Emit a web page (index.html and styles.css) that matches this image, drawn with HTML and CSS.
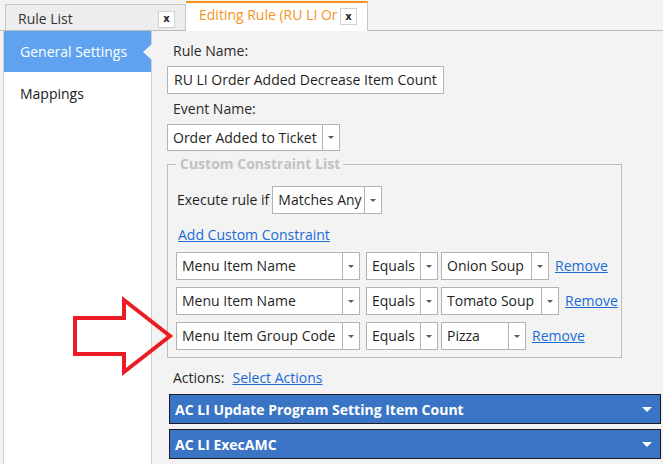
FILE: index.html
```html
<!DOCTYPE html>
<html lang="en">
<head>
<meta charset="utf-8">
<title>Editing Rule</title>
<link rel="stylesheet" href="styles.css">
</head>
<body>
<div class="app">
  <div class="tabs">
    <div class="tab">
      <span class="tab-title">Rule List</span>
      <span class="tab-close">x</span>
    </div>
    <div class="tab active">
      <span class="tab-title">Editing Rule (RU LI Or</span>
      <span class="tab-close">x</span>
    </div>
  </div>
  <div class="body">
    <nav class="sidebar">
      <div class="nav-item selected">General Settings</div>
      <div class="nav-item">Mappings</div>
    </nav>
    <main class="content">
      <div class="label">Rule Name:</div>
      <div class="textbox">RU LI Order Added Decrease Item Count</div>
      <div class="label">Event Name:</div>
      <div class="combo w-event"><span class="combo-text">Order Added to Ticket</span><span class="combo-btn"></span></div>

      <fieldset class="group">
        <legend class="group-title">Custom Constraint List</legend>
        <div class="exec-row">
          <span class="exec-label">Execute rule if</span>
          <div class="combo w-match"><span class="combo-text">Matches Any</span><span class="combo-btn"></span></div>
        </div>
        <a class="link add-link" href="#">Add Custom Constraint</a>
        <div class="rows">
          <div class="c-row">
            <div class="combo w-field"><span class="combo-text">Menu Item Name</span><span class="combo-btn"></span></div>
            <div class="combo w-op"><span class="combo-text">Equals</span><span class="combo-btn"></span></div>
            <div class="combo w-v1"><span class="combo-text">Onion Soup</span><span class="combo-btn"></span></div>
            <a class="link remove" href="#">Remove</a>
          </div>
          <div class="c-row">
            <div class="combo w-field"><span class="combo-text">Menu Item Name</span><span class="combo-btn"></span></div>
            <div class="combo w-op"><span class="combo-text">Equals</span><span class="combo-btn"></span></div>
            <div class="combo w-v2"><span class="combo-text">Tomato Soup</span><span class="combo-btn"></span></div>
            <a class="link remove" href="#">Remove</a>
          </div>
          <div class="c-row">
            <div class="combo w-field"><span class="combo-text">Menu Item Group Code</span><span class="combo-btn"></span></div>
            <div class="combo w-op"><span class="combo-text">Equals</span><span class="combo-btn"></span></div>
            <div class="combo w-v3"><span class="combo-text">Pizza</span><span class="combo-btn"></span></div>
            <a class="link remove" href="#">Remove</a>
          </div>
        </div>
      </fieldset>

      <div class="actions-row">
        <span class="actions-label">Actions:</span>
        <a class="link" href="#">Select Actions</a>
      </div>
      <div class="action-bar"><span>AC LI Update Program Setting Item Count</span><span class="bar-arrow"></span></div>
      <div class="action-bar"><span>AC LI ExecAMC</span><span class="bar-arrow"></span></div>
    </main>
  </div>
  <svg class="callout" width="663" height="464" viewBox="0 0 663 464" aria-hidden="true">
    <polygon points="75,318 124,318 124,300 170,336 124,372 124,354 75,354" fill="none" stroke="#ec1c24" stroke-width="4" stroke-linejoin="miter"/>
  </svg>
</div>
</body>
</html>
```

FILE: styles.css
```css
* { box-sizing: border-box; }

html, body {
  margin: 0;
  padding: 0;
}

body {
  width: 663px;
  height: 464px;
  overflow: hidden;
  background: #f3f3f3;
  font-family: "Open Sans", "Noto Sans", "Liberation Sans", sans-serif;
  font-size: 14px;
  color: #1f1f1f;
}

.app {
  position: relative;
  width: 663px;
  height: 464px;
}

/* ---------- tabs ---------- */
.tabs {
  height: 31px;
  display: flex;
  align-items: flex-end;
  padding-left: 5px;
  border-bottom: 1px solid #bcbcbc;
}

.tab {
  height: 26px;
  width: 181px;
  display: flex;
  align-items: center;
  background: #ededed;
  border: 1px solid #c6c6c6;
  border-bottom: none;
  padding-left: 12px;
}

.tab-title {
  flex: none;
  width: 141px;
  white-space: nowrap;
  overflow: hidden;
  line-height: 20px;
  color: #333;
  margin-top: 2px;
}

.tab-close {
  flex: none;
  width: 17px;
  height: 17px;
  background: #fff;
  border: 1px solid #d2d2d2;
  display: flex;
  align-items: center;
  justify-content: center;
  font-family: "DejaVu Sans", sans-serif;
  font-weight: bold;
  font-size: 10px;
  line-height: 1;
  color: #222;
  margin-top: 3px;
  margin-left: -1px;
}

.tab.active {
  height: 30px;
  width: 182px;
  margin-bottom: -1px;
  background: #fff;
  border: none;
  border-top: 2px solid #f7931e;
  border-right: 1px solid #c6c6c6;
  padding-left: 13px;
  align-items: flex-start;
  padding-top: 2px;
}

.tab.active .tab-title {
  color: #f39323;
  width: 141px;
  margin-top: 0;
}

.tab.active .tab-close {
  margin-top: 3px;
  margin-left: 0;
}

/* ---------- body ---------- */
.body {
  display: flex;
  height: 433px;
}

.sidebar {
  flex: none;
  width: 149px;
  margin-left: 3px;
  background: #fff;
  border-left: 1px solid #cfcfcf;
  border-right: 1px solid #cfcfcf;
}

.nav-item {
  position: relative;
  height: 41px;
  display: flex;
  align-items: center;
  padding-left: 16px;
  font-size: 14px;
  color: #1a1a1a;
}

.nav-item.selected {
  background: #5fa3f0;
  color: #fff;
}

.nav-item.selected + .nav-item {
  height: 43px;
}

.nav-item.selected::after {
  content: "";
  position: absolute;
  right: -1px;
  top: 13px;
  border-top: 8px solid transparent;
  border-bottom: 8px solid transparent;
  border-right: 9px solid #f3f3f3;
}

.content {
  flex: 1;
  padding: 5px 0 0 15px;
  display: flex;
  flex-direction: column;
  align-items: flex-start;
}

.label {
  padding: 5px 6px;
  line-height: 20px;
  color: #2a2a2a;
}

.textbox {
  width: 277px;
  height: 28px;
  background: #fff;
  border: 1px solid #b5b5b5;
  padding-left: 6px;
  line-height: 26px;
  white-space: nowrap;
  overflow: hidden;
}

/* ---------- combo ---------- */
.combo {
  flex: none;
  display: flex;
  height: 28px;
  background: #fff;
  border: 1px solid #b3b3b3;
}

.combo-text {
  flex: 1;
  padding-left: 5px;
  line-height: 26px;
  white-space: nowrap;
  overflow: hidden;
}

.combo-btn {
  flex: none;
  width: 17px;
  border-left: 1px solid #b3b3b3;
  display: flex;
  align-items: center;
  justify-content: center;
}

.combo-btn::before {
  content: "";
  border-left: 3px solid transparent;
  border-right: 3px solid transparent;
  border-top: 3px solid #5a5a5a;
}

.w-event { width: 173px; height: 27px; }
.w-match { width: 110px; margin-left: 3px; }
.w-field { width: 184px; }
.w-op { width: 72px; margin-left: 6px; }
.w-v1 { width: 108px; margin-left: 3px; }
.w-v2 { width: 118px; margin-left: 3px; }
.w-v3 { width: 85px; margin-left: 3px; }

/* ---------- group ---------- */
.group {
  margin: 3px 0 0 0;
  width: 455px;
  border: 1px solid #bdbdbd;
  padding: 12px 0 7px 8px;
}

.group-title {
  padding: 0 3px 0 4px;
  font-weight: bold;
  color: #c2c2c2;
  line-height: 20px;
}

.exec-row {
  display: flex;
  align-items: center;
}

.exec-label {
  line-height: 20px;
  margin-left: 1px;
}

.link {
  color: #1a6bd5;
  text-decoration: underline;
  line-height: 20px;
}

.add-link {
  display: inline-block;
  margin-top: 11px;
  margin-left: 2px;
}

.rows {
  margin-top: 7px;
  display: flex;
  flex-direction: column;
  gap: 7px;
}

.c-row {
  display: flex;
  align-items: center;
}

.remove {
  margin-left: 6px;
}

/* ---------- actions ---------- */
.actions-row {
  margin-top: 10px;
  padding-left: 6px;
  display: flex;
  gap: 8px;
  line-height: 20px;
}

.actions-label {
  color: #2a2a2a;
}

.action-bar {
  margin-top: 5px;
  margin-left: 2px;
  width: 492px;
  height: 30px;
  background: #3a74c4;
  border: 1px solid #1b1d24;
  color: #fff;
  font-weight: bold;
  display: flex;
  align-items: center;
  justify-content: space-between;
  padding: 0 8px 0 5px;
}

.actions-row + .action-bar {
  margin-top: 6px;
}

.bar-arrow {
  border-left: 5px solid transparent;
  border-right: 5px solid transparent;
  border-top: 5px solid #fff;
}

/* ---------- callout arrow ---------- */
.callout {
  position: absolute;
  left: 0;
  top: 0;
  pointer-events: none;
}
```
